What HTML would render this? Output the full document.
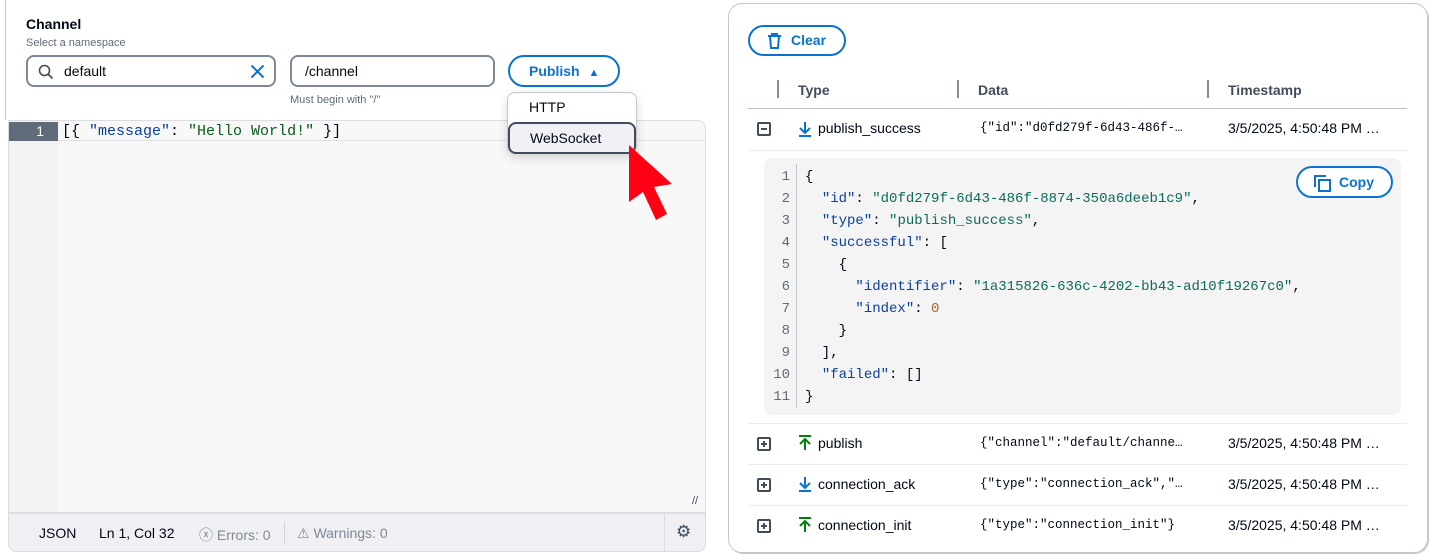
<!DOCTYPE html>
<html><head><style>
*{box-sizing:border-box;margin:0;padding:0}
body{width:1437px;height:560px;background:#fff;font-family:"Liberation Sans",sans-serif;color:#000716;position:relative;overflow:hidden}
.abs{position:absolute}
.mono{font-family:"Liberation Mono",monospace}
.inp{position:absolute;height:32px;border:2px solid #7d8998;border-radius:8px;background:#fff;font-size:14px;line-height:28px}
.btn{position:absolute;border:2px solid #0972d3;border-radius:20px;color:#0972d3;font-weight:bold;font-size:14px}
.row{position:absolute;left:748px;width:659px;height:41px;border-top:1px solid #e9ebed;font-size:14px}
.row .t{position:absolute;left:70px;top:11px}
.row .d{position:absolute;left:232px;top:12px;font-size:12.5px;font-family:"Liberation Mono",monospace;color:#000716}
.row .s{position:absolute;left:480px;top:11px}
.pm{position:absolute;left:9px;top:13px;width:14px;height:14px;border:2px solid #414d5c;border-radius:2px}
.pm:before{content:"";position:absolute;left:2px;top:4px;width:6px;height:2px;background:#414d5c}
.pm.p:after{content:"";position:absolute;left:4px;top:2px;width:2px;height:6px;background:#414d5c}
.code div{height:22px}
.k{color:#0b40a0}.st{color:#0b6b5c}.n{color:#b5651d}
</style></head><body>
<div class="abs" style="left:5px;top:0;width:1px;height:120px;background:#c6c6cd"></div>
<div class="abs" style="left:26px;top:16px;font-weight:bold;font-size:14px">Channel</div>
<div class="abs" style="left:26px;top:37px;font-size:11px;color:#5f6b7a">Select a namespace</div>
<div class="inp" style="left:26px;top:55px;width:250px;padding-left:36px">default
<svg class="abs" style="left:10px;top:7px" width="16" height="16" viewBox="0 0 16 16"><circle cx="6.5" cy="6.5" r="5" fill="none" stroke="#414d5c" stroke-width="1.6"/><path d="M10 10l4.5 4.5" stroke="#414d5c" stroke-width="1.8"/></svg>
<svg class="abs" style="left:222px;top:7px" width="15" height="15" viewBox="0 0 15 15"><path d="M1.5 1.5l12 12M13.5 1.5l-12 12" stroke="#0972d3" stroke-width="2"/></svg></div>
<div class="inp" style="left:290px;top:55px;width:205px;padding-left:13px">/channel</div>
<div class="abs" style="left:290px;top:94px;font-size:11px;color:#5f6b7a">Must begin with "/"</div>
<div class="btn" style="left:508px;top:55px;width:112px;height:32px;line-height:28px;padding-left:19px">Publish <span style="font-size:11px;margin-left:5px">▲</span></div>
<!-- editor -->
<div class="abs" style="left:8px;top:120px;width:698px;height:432px;border:1px solid #dcdce0;border-radius:0 8px 8px 8px;background:#f8f8f8;overflow:hidden">
<div class="abs" style="left:0;top:0;width:49px;height:391px;background:#f2f2f4"></div>
<div class="abs" style="left:0;top:1px;width:49px;height:19px;background:#5f6b7a;color:#fff;font-size:14px;text-align:right;padding-right:14px;line-height:19px" >1</div>
<div class="abs" style="left:49px;top:19px;width:649px;height:1px;background:#e2e2e6"></div>
<div class="abs mono" style="left:53px;top:1px;font-size:15px;line-height:19px;white-space:pre">[{ <span class="k">"message"</span>: <span style="color:#0a5a1a">"Hello World!"</span> }]</div>
<div class="abs" style="left:0;top:391px;width:698px;height:41px;background:#f0f0f4;border-top:2px solid #dcdce0;font-size:14px;color:#000716">
<span class="abs" style="left:30px;top:11px">JSON</span>
<span class="abs" style="left:90px;top:11px">Ln 1, Col 32</span>
<span class="abs" style="left:190px;top:11px;color:#7d8998">ⓧ Errors: 0</span>
<span class="abs" style="left:275px;top:8px;width:1px;height:22px;background:#d1d5db"></span>
<span class="abs" style="left:288px;top:11px;color:#7d8998">⚠ Warnings: 0</span>
<span class="abs" style="left:655px;top:-2px;width:1px;height:41px;background:#dcdce0"></span>
<span class="abs" style="left:667px;top:8px;font-size:17px;color:#414d5c">⚙</span></div>
<div class="abs" style="left:683px;top:374px;font-size:11px;color:#414d5c">//</div>
</div>
<!-- dropdown -->
<div class="abs" style="left:507px;top:92px;width:130px;height:62px;background:#fff;border:1px solid #c6c6cd;border-radius:8px;box-shadow:0 4px 10px rgba(0,0,0,.15)">
<div class="abs" style="left:21px;top:6px;font-size:14px">HTTP</div>
<div class="abs" style="left:0;top:29px;width:128px;height:32px;border:2px solid #414d5c;border-radius:8px;background:#f0f0f5;font-size:14px;padding-left:20px;line-height:28px">WebSocket</div>
</div>
<svg class="abs" style="left:628px;top:144px" width="50" height="80" viewBox="0 0 50 80"><path d="M1 1L1 58L15 48L28 76L39 70L26 43L44 40Z" fill="#ff0015"/></svg>
<!-- right card -->
<div class="abs" style="left:728px;top:3px;width:700px;height:550px;border:1px solid #c6c6cd;border-radius:14px;box-shadow:1px 1px 0 #c6c6cd"></div>
<div class="btn" style="left:748px;top:25px;width:98px;height:31px;line-height:27px;padding-left:41px">Clear
<svg class="abs" style="left:17px;top:6px" width="15" height="16" viewBox="0 0 15 16"><path d="M1 3h13M5 3V1h5v2M3 3l1 12h7l1-12" fill="none" stroke="#0972d3" stroke-width="2"/></svg></div>
<div class="abs" style="left:748px;top:80px;width:659px;height:29px;border-bottom:1px solid #b6bec9;font-weight:bold;font-size:14px;color:#414d5c">
<span class="abs" style="left:29px;top:0;width:2px;height:18px;background:#8c8c94"></span>
<span class="abs" style="left:50px;top:2px">Type</span>
<span class="abs" style="left:209px;top:0;width:2px;height:18px;background:#8c8c94"></span>
<span class="abs" style="left:230px;top:2px">Data</span>
<span class="abs" style="left:459px;top:0;width:2px;height:18px;background:#8c8c94"></span>
<span class="abs" style="left:480px;top:2px">Timestamp</span></div>
<div class="row" style="top:109px;border-top:none"><div class="pm"></div>
<svg class="abs" style="left:50px;top:13px" width="14" height="15" viewBox="0 0 14 15"><path d="M7 0v10M2 6l5 5 5-5M1 14h12" fill="none" stroke="#0972d3" stroke-width="2"/></svg>
<span class="t">publish_success</span><span class="d">{"id":"d0fd279f-6d43-486f-…</span><span class="s">3/5/2025, 4:50:48 PM …</span></div>
<div class="abs" style="left:748px;top:150px;width:659px;height:1px;background:#e9ebed"></div>
<div class="abs" style="left:764px;top:158px;width:637px;height:257px;background:#f4f4f4;border-radius:8px">
<div class="abs mono" style="left:8px;top:8px;font-size:14px;line-height:22px;color:#5f6b7a;text-align:right;width:18px">1<br>2<br>3<br>4<br>5<br>6<br>7<br>8<br>9<br>10<br>11</div>
<div class="abs" style="left:32px;top:6px;width:1px;height:244px;background:#c6c6cd"></div>
<div class="abs mono code" style="left:41px;top:8px;font-size:14px;line-height:22px;white-space:pre;color:#000716"><div>{</div><div>  <span class="k">"id"</span>: <span class="st">"d0fd279f-6d43-486f-8874-350a6deeb1c9"</span>,</div><div>  <span class="k">"type"</span>: <span class="st">"publish_success"</span>,</div><div>  <span class="k">"successful"</span>: [</div><div>    {</div><div>      <span class="k">"identifier"</span>: <span class="st">"1a315826-636c-4202-bb43-ad10f19267c0"</span>,</div><div>      <span class="k">"index"</span>: <span class="n">0</span></div><div>    }</div><div>  ],</div><div>  <span class="k">"failed"</span>: []</div><div>}</div></div>
<div class="btn" style="left:532px;top:8px;width:97px;height:32px;line-height:28px;padding-left:41px;background:#fff">Copy
<svg class="abs" style="left:16px;top:7px" width="18" height="17" viewBox="0 0 18 17"><path d="M1 12V1h11" fill="none" stroke="#0972d3" stroke-width="2"/><rect x="5" y="5" width="11" height="11" fill="none" stroke="#0972d3" stroke-width="2"/></svg></div>
</div>
<div class="row" style="top:423px"><div class="pm p"></div>
<svg class="abs" style="left:50px;top:11px" width="14" height="15" viewBox="0 0 14 15"><path d="M1 1h12M7 15V5M2 9l5-5 5 5" fill="none" stroke="#037f0c" stroke-width="2"/></svg>
<span class="t">publish</span><span class="d">{"channel":"default/channe…</span><span class="s">3/5/2025, 4:50:48 PM …</span></div>
<div class="row" style="top:464px"><div class="pm p"></div>
<svg class="abs" style="left:50px;top:12px" width="14" height="15" viewBox="0 0 14 15"><path d="M7 0v10M2 6l5 5 5-5M1 14h12" fill="none" stroke="#0972d3" stroke-width="2"/></svg>
<span class="t">connection_ack</span><span class="d">{"type":"connection_ack","…</span><span class="s">3/5/2025, 4:50:48 PM …</span></div>
<div class="row" style="top:505px"><div class="pm p"></div>
<svg class="abs" style="left:50px;top:11px" width="14" height="15" viewBox="0 0 14 15"><path d="M1 1h12M7 15V5M2 9l5-5 5 5" fill="none" stroke="#037f0c" stroke-width="2"/></svg>
<span class="t">connection_init</span><span class="d">{"type":"connection_init"}</span><span class="s">3/5/2025, 4:50:48 PM …</span></div>
</body></html>
